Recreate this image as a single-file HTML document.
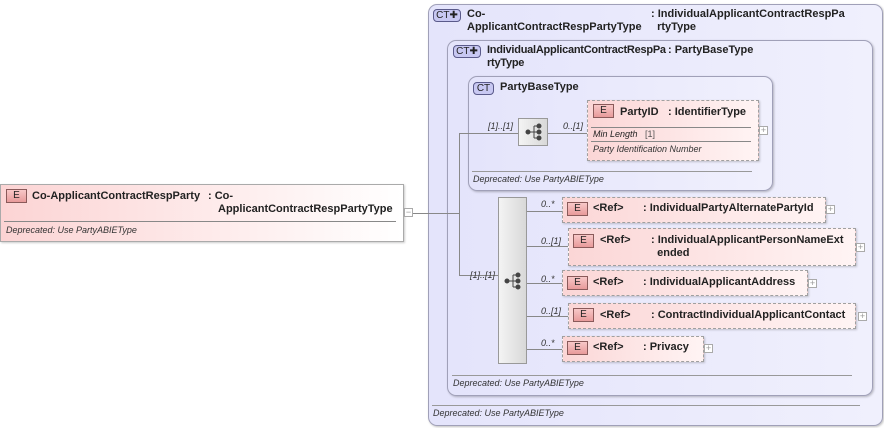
<!DOCTYPE html>
<html><head><style>
*{margin:0;padding:0;box-sizing:border-box}
body{width:884px;height:428px;background:#fff;position:relative;overflow:hidden;font-family:"Liberation Sans",sans-serif;font-size:11px;color:#222}
.a{position:absolute}
.b{font-weight:bold;font-size:11px;line-height:13px;white-space:nowrap}
.i{font-style:italic;font-size:9px;color:#333;white-space:nowrap}
.ct{position:absolute;border:1px solid #a0a0b8;border-radius:9px;background:linear-gradient(90deg,#e4e4fb,#f0f0fd);box-shadow:1px 1px 2px rgba(0,0,0,.25)}
.badge{position:absolute;height:13px;border:1px solid #5a5a8a;border-radius:4px;background:#c8c8f2;font-size:10px;line-height:11px;text-align:center;color:#222}
.eb{position:absolute;width:21px;height:14px;border:1px solid #8a5a5a;background:linear-gradient(#f8c8c8,#e89a9a);font-size:10px;line-height:12px;text-align:center;color:#222}
.el{position:absolute;border:1px dashed #a0a0a0;background:linear-gradient(90deg,#fbd6d6,#fff4f4);box-shadow:1px 1px 2px rgba(0,0,0,.2)}
.pl{position:absolute;width:9px;height:9px;border:1px solid #aaa;background:#fff;font-size:9px;line-height:7px;text-align:center;color:#999}
.h{position:absolute;height:1px;background:#888}
.v{position:absolute;width:1px;background:#888}
.seq{position:absolute;border:1px solid #999;background:linear-gradient(90deg,#f4f4f4,#d8d8d8)}
</style></head><body>

<div class="ct" style="left:428px;top:4px;width:455px;height:422px"></div>
<div class="badge" style="left:433px;top:9px;width:28px">CT✚</div>
<div class="a b" style="left:467px;top:8px">Co-<br>ApplicantContractRespPartyType</div>
<div class="a b" style="left:651px;top:8px">: IndividualApplicantContractRespPa<br>&nbsp;&nbsp;rtyType</div>
<div class="h" style="left:432px;top:405px;width:428px;background:#999"></div>
<div class="a i" style="left:433px;top:408px">Deprecated: Use PartyABIEType</div>

<div class="ct" style="left:447px;top:40px;width:426px;height:356px"></div>
<div class="badge" style="left:453px;top:45px;width:28px">CT✚</div>
<div class="a b" style="left:487px;top:44px;letter-spacing:-0.25px">IndividualApplicantContractRespPa<br>rtyType</div>
<div class="a b" style="left:668px;top:44px">: PartyBaseType</div>
<div class="h" style="left:452px;top:375px;width:400px;background:#999"></div>
<div class="a i" style="left:453px;top:378px">Deprecated: Use PartyABIEType</div>

<div class="ct" style="left:468px;top:76px;width:305px;height:115px"></div>
<div class="badge" style="left:473px;top:82px;width:21px">CT</div>
<div class="a b" style="left:500px;top:81px">PartyBaseType</div>
<div class="h" style="left:472px;top:171px;width:280px;background:#999"></div>
<div class="a i" style="left:473px;top:174px">Deprecated: Use PartyABIEType</div>

<div class="h" style="left:459px;top:133px;width:59px"></div>
<div class="a i" style="left:488px;top:121px">[1]..[1]</div>
<div class="seq" style="left:518px;top:118px;width:30px;height:28px"></div>
<svg class="a" style="left:525px;top:123px" width="18" height="18"><g fill="#444" stroke="#444"><circle cx="3" cy="9" r="2"/><line x1="3" y1="9" x2="9" y2="9"/><line x1="9" y1="3" x2="9" y2="15"/><line x1="9" y1="3" x2="13" y2="3"/><line x1="9" y1="15" x2="13" y2="15"/><line x1="9" y1="9" x2="13" y2="9"/><circle cx="14" cy="3" r="2"/><circle cx="14" cy="9" r="2"/><circle cx="14" cy="15" r="2"/></g></svg>
<div class="h" style="left:548px;top:133px;width:39px"></div>
<div class="a i" style="left:563px;top:121px">0..[1]</div>

<div class="el" style="left:587px;top:100px;width:172px;height:61px"></div>
<div class="eb" style="left:593px;top:104px">E</div>
<div class="a b" style="left:620px;top:106px">PartyID</div>
<div class="a b" style="left:668px;top:106px">: IdentifierType</div>
<div class="h" style="left:591px;top:127px;width:160px"></div>
<div class="a i" style="left:593px;top:129px;color:#222">Min Length &nbsp;&nbsp;<span style="font-style:normal;color:#555">[1]</span></div>
<div class="h" style="left:591px;top:141px;width:160px"></div>
<div class="a i" style="left:593px;top:144px">Party Identification Number</div>
<div class="pl" style="left:759px;top:126px">+</div>

<div class="el" style="left:0;top:184px;width:404px;height:58px;border:1px solid #aaa;background:linear-gradient(90deg,#fcd4d4,#fff)"></div>
<div class="eb" style="left:6px;top:189px">E</div>
<div class="a b" style="left:32px;top:190px">Co-ApplicantContractRespParty</div>
<div class="a b" style="left:208px;top:190px">: Co-</div>
<div class="a b" style="left:218px;top:203px">ApplicantContractRespPartyType</div>
<div class="h" style="left:4px;top:221px;width:392px"></div>
<div class="a i" style="left:6px;top:225px">Deprecated: Use PartyABIEType</div>
<div class="pl" style="left:404px;top:208px">−</div>
<div class="h" style="left:413px;top:213px;width:46px"></div>

<div class="v" style="left:459px;top:133px;height:143px"></div>
<div class="h" style="left:459px;top:275px;width:39px"></div>
<div class="a i" style="left:470px;top:270px">[1]..[1]</div>

<div class="seq" style="left:498px;top:197px;width:29px;height:167px"></div>
<svg class="a" style="left:504px;top:272px" width="18" height="18"><g fill="#444" stroke="#444"><circle cx="3" cy="9" r="2"/><line x1="3" y1="9" x2="9" y2="9"/><line x1="9" y1="3" x2="9" y2="15"/><line x1="9" y1="3" x2="13" y2="3"/><line x1="9" y1="15" x2="13" y2="15"/><line x1="9" y1="9" x2="13" y2="9"/><circle cx="14" cy="3" r="2"/><circle cx="14" cy="9" r="2"/><circle cx="14" cy="15" r="2"/></g></svg>

<div class="h" style="left:527px;top:211px;width:35px"></div>
<div class="a i" style="left:541px;top:199px">0..*</div>
<div class="el" style="left:562px;top:197px;width:264px;height:26px"></div>
<div class="eb" style="left:567px;top:202px">E</div>
<div class="a b" style="left:593px;top:202px">&lt;Ref&gt;</div>
<div class="a b" style="left:643px;top:202px">: IndividualPartyAlternatePartyId</div>
<div class="pl" style="left:826px;top:205px">+</div>

<div class="h" style="left:527px;top:246px;width:41px"></div>
<div class="a i" style="left:541px;top:236px">0..[1]</div>
<div class="el" style="left:568px;top:228px;width:288px;height:38px"></div>
<div class="eb" style="left:573px;top:234px">E</div>
<div class="a b" style="left:600px;top:234px">&lt;Ref&gt;</div>
<div class="a b" style="left:651px;top:234px">: IndividualApplicantPersonNameExt<br>&nbsp;&nbsp;ended</div>
<div class="pl" style="left:856px;top:243px">+</div>

<div class="h" style="left:527px;top:283px;width:35px"></div>
<div class="a i" style="left:541px;top:274px">0..*</div>
<div class="el" style="left:562px;top:270px;width:246px;height:26px"></div>
<div class="eb" style="left:567px;top:276px">E</div>
<div class="a b" style="left:593px;top:276px">&lt;Ref&gt;</div>
<div class="a b" style="left:643px;top:276px">: IndividualApplicantAddress</div>
<div class="pl" style="left:808px;top:279px">+</div>

<div class="h" style="left:527px;top:316px;width:41px"></div>
<div class="a i" style="left:541px;top:306px">0..[1]</div>
<div class="el" style="left:568px;top:303px;width:288px;height:26px"></div>
<div class="eb" style="left:573px;top:308px">E</div>
<div class="a b" style="left:600px;top:309px">&lt;Ref&gt;</div>
<div class="a b" style="left:651px;top:309px">: ContractIndividualApplicantContact</div>
<div class="pl" style="left:858px;top:312px">+</div>

<div class="h" style="left:527px;top:349px;width:35px"></div>
<div class="a i" style="left:541px;top:338px">0..*</div>
<div class="el" style="left:562px;top:336px;width:142px;height:26px"></div>
<div class="eb" style="left:567px;top:341px">E</div>
<div class="a b" style="left:593px;top:341px">&lt;Ref&gt;</div>
<div class="a b" style="left:643px;top:341px">: Privacy</div>
<div class="pl" style="left:704px;top:344px">+</div>

</body></html>
